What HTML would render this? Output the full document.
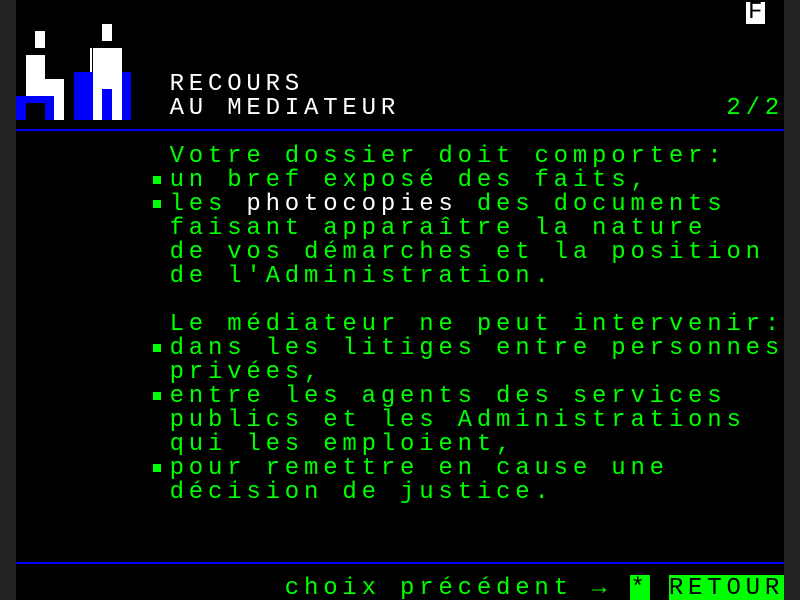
<!DOCTYPE html>
<html><head><meta charset="utf-8"><style>
html,body{margin:0;padding:0;background:#222;}
#s{position:absolute;left:16px;top:0;width:768px;height:600px;background:#000;overflow:hidden;}
.r{position:absolute;left:0;height:24px;line-height:26px;font-family:"Liberation Mono",monospace;font-size:24px;letter-spacing:4.8px;white-space:pre;color:#0f0;}
.w{color:#fff}
.b{position:absolute;width:8px;height:8px;background:#0f0;}
.hl{position:absolute;left:0;width:768px;height:2px;background:#00f;}
.inv{background:#0f0;color:#000;}
</style></head><body><div id="s">
<svg style="position:absolute;left:0;top:0" width="140" height="120">
<rect x="19" y="31" width="10" height="17" fill="#fff"/>
<rect x="10" y="55" width="19" height="41" fill="#fff"/>
<rect x="10" y="79" width="38" height="17" fill="#fff"/>
<rect x="38" y="79" width="10" height="41" fill="#fff"/>
<rect x="0" y="96" width="38" height="24" fill="#00f"/>
<rect x="10" y="103" width="19" height="17" fill="#000"/>
<rect x="86" y="24" width="10" height="17" fill="#fff"/>
<rect x="74" y="48" width="2" height="24" fill="#fff"/>
<rect x="77" y="48" width="29" height="72" fill="#fff"/>
<rect x="58" y="72" width="19" height="48" fill="#00f"/>
<rect x="106" y="72" width="9" height="48" fill="#00f"/>
<rect x="86" y="89" width="10" height="31" fill="#00f"/>
</svg>
<div class="r" style="top:0;left:729.6px;width:19.2px;"><span style="background:#fff;color:#000;display:inline-block;width:19.2px;height:22px;line-height:22px;text-align:center;letter-spacing:0">F</span></div>
<div class="r w" style="top:72px;left:153.6px">RECOURS</div>
<div class="r w" style="top:96px;left:153.6px">AU MEDIATEUR</div>
<div class="r" style="top:96px;left:710.4px">2/2</div>
<div class="hl" style="top:129px"></div>
<div class="r" style="top:144px;left:153.6px">Votre dossier doit comporter:</div>
<div class="b" style="left:137px;top:176px"></div>
<div class="r" style="top:168px;left:153.6px">un bref exposé des faits,</div>
<div class="b" style="left:137px;top:200px"></div>
<div class="r" style="top:192px;left:153.6px">les <span class="w">photocopies</span> des documents</div>
<div class="r" style="top:216px;left:153.6px">faisant apparaître la nature</div>
<div class="r" style="top:240px;left:153.6px">de vos démarches et la position</div>
<div class="r" style="top:264px;left:153.6px">de l'Administration.</div>
<div class="r" style="top:312px;left:153.6px">Le médiateur ne peut intervenir:</div>
<div class="b" style="left:137px;top:344px"></div>
<div class="r" style="top:336px;left:153.6px">dans les litiges entre personnes</div>
<div class="r" style="top:360px;left:153.6px">privées,</div>
<div class="b" style="left:137px;top:392px"></div>
<div class="r" style="top:384px;left:153.6px">entre les agents des services</div>
<div class="r" style="top:408px;left:153.6px">publics et les Administrations</div>
<div class="r" style="top:432px;left:153.6px">qui les emploient,</div>
<div class="b" style="left:137px;top:464px"></div>
<div class="r" style="top:456px;left:153.6px">pour remettre en cause une</div>
<div class="r" style="top:480px;left:153.6px">décision de justice.</div>
<div class="hl" style="top:562px"></div>
<div class="r" style="top:576px;left:268.8px">choix précédent → <span class="inv">*</span> <span class="inv">RETOUR</span></div>
</div></body></html>
